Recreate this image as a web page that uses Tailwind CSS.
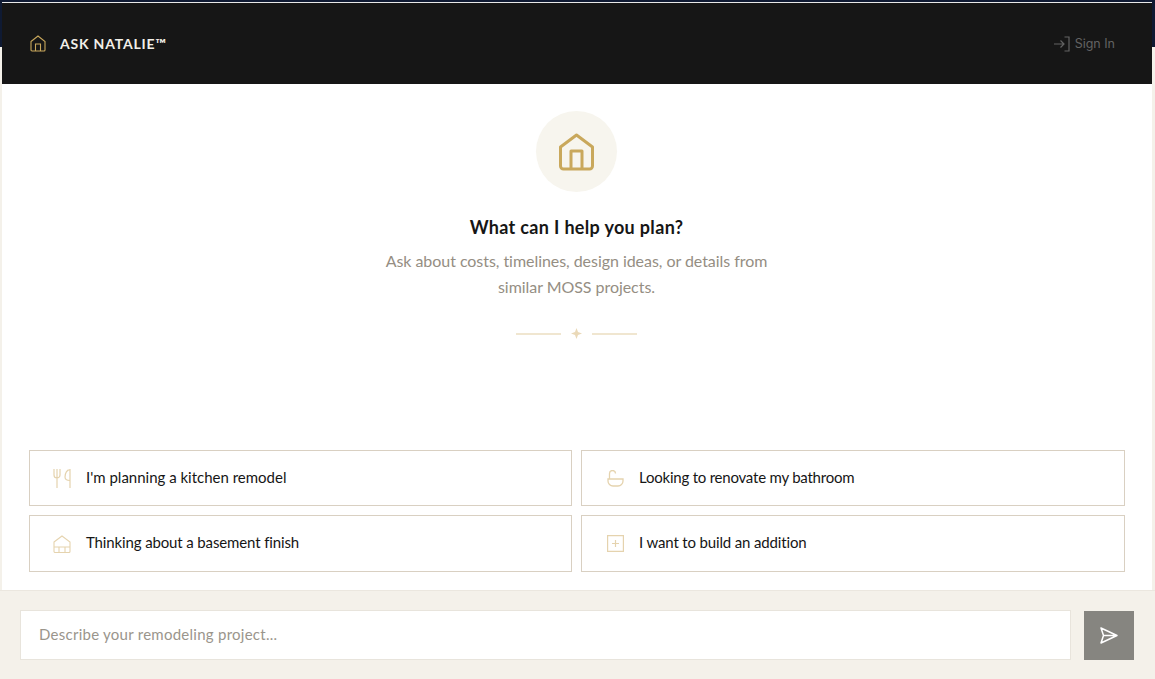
<!doctype html>
<html>
<head>
<meta charset="utf-8">
<script src="https://cdn.jsdelivr.net/npm/@tailwindcss/browser@4"></script>
</head>
<body class="m-0">
<div class="h-[679px] w-[1155px] overflow-hidden bg-[linear-gradient(#0f1a33_47px,#f4f1ea_47px)] pt-[2px] pl-[2px] pr-[3px] font-['Lato',sans-serif] flex flex-col">
  <header class="h-[82px] shrink-0 bg-[#161616] border-t border-[#e8e8e8] flex items-center justify-between pl-[28px] pr-[37px]">
    <div class="flex items-center gap-[14px]">
      <svg class="w-[16px] h-[17px]" viewBox="0 0 16 17" fill="none" stroke="#c9a85c" stroke-width="1.1"><path d="M1 6.500 8 1l7 5.500V15a1 1 0 0 1-1 1H2a1 1 0 0 1-1-1z"/><path d="M5.500 16V9h5v7"/></svg>
      <span class="text-[14px] font-bold tracking-[0.8px] text-[#f2efe8]">ASK NATALIE™</span>
    </div>
    <div class="flex items-center gap-[5px] text-[#636363]">
      <svg class="w-[16px] h-[16px]" viewBox="0 0 16 16" fill="none" stroke="currentColor" stroke-width="1.2"><path d="M0 8h10M6.500 4.500 10 8l-3.500 3.500M10.500 1H15v14h-4.500"/></svg>
      <span class="text-[12.5px] mt-[1px] font-['Inter',sans-serif]">Sign In</span>
    </div>
  </header>
  <main class="flex-1 bg-white flex flex-col items-center pt-[27px] px-[27px]">
    <div class="mr-[1px] w-[81px] h-[81px] rounded-full bg-[#f7f5ee] flex items-center justify-center">
      <svg class="w-[35px] h-[38px]" viewBox="0 0 35 38" fill="none" stroke="#c9a85c" stroke-width="3" stroke-linejoin="round"><path d="M1.500 14 17.500 2l16 12v19a3 3 0 0 1-3 3h-26a3 3 0 0 1-3-3z"/><path d="M12 36V18h11v18"/></svg>
    </div>
    <h1 class="mr-[1px] mt-[23px] text-[18px] leading-[24px] font-bold tracking-[0.33px] text-[#161616]">What can I help you plan?</h1>
    <p class="mr-[1px] mt-[9px] w-[420px] text-center text-[16px] leading-[26px] font-normal tracking-[-0.05px] text-[#958e83]">Ask about costs, timelines, design ideas, or details from<br>similar MOSS projects.</p>
    <div class="mr-[1px] mt-[28px] flex items-center gap-[10px]">
      <span class="w-[45px] h-[2px] bg-[#f0e6d0]"></span>
      <svg class="w-[11px] h-[11px]" viewBox="0 0 11 11" fill="#ead9b8"><path d="M5.500 0 7 4l4 1.500L7 7l-1.500 4L4 7 0 5.500 4 4z"/></svg>
      <span class="w-[45px] h-[2px] bg-[#f0e6d0]"></span>
    </div>
    <div class="mt-auto mb-[18px] w-full grid grid-cols-[543px_544px] gap-x-[9px] gap-y-[9px] text-[15px] text-[#161616]">
      <button class="h-[56px] border border-[#d9d0c2] bg-white flex items-center gap-[15px] pl-[23px]">
        <svg class="w-[18px] h-[19px]" viewBox="0 0 18 19" fill="none" stroke="#e5d3ae" stroke-width="1.200"><path d="M1 0v6a3 3 0 0 0 6 0V0M4 0v19M17 0v19M17 .6C14 .6 12 4 12 8c0 2.500 2 3.500 5 3.500"/></svg>
        <span class="pb-[2px]">I'm planning a kitchen remodel</span>
      </button>
      <button class="h-[56px] border border-[#d9d0c2] bg-white flex items-center gap-[15px] pl-[25px]">
        <svg class="w-[17px] h-[17px]" viewBox="0 0 17 17" fill="none" stroke="#e5d3ae" stroke-width="1.300"><path d="M2.500 9V3.500a3 3 0 0 1 6 0"/><path d="M1 9h15v2a5 5 0 0 1-5 5H6a5 5 0 0 1-5-5z"/></svg>
        <span class="pb-[2px] tracking-[-0.22px]">Looking to renovate my bathroom</span>
      </button>
      <button class="h-[57px] border border-[#d9d0c2] bg-white flex items-center gap-[15px] pl-[23px]">
        <svg class="w-[18px] h-[18px]" viewBox="0 0 18 18" fill="none" stroke="#e5d3ae" stroke-width="1.100"><path d="M1 7 9 1l8 6v9.500a1 1 0 0 1-1 1H2a1 1 0 0 1-1-1zM1 12h16M6 12v5.500M12 12v5.500"/></svg>
        <span class="pb-[2px] tracking-[-0.13px]">Thinking about a basement finish</span>
      </button>
      <button class="h-[57px] border border-[#d9d0c2] bg-white flex items-center gap-[15px] pl-[25px]">
        <svg class="w-[17px] h-[17px]" viewBox="0 0 17 17" fill="none" stroke="#e5d3ae" stroke-width="1.200"><path d="M.6.600h15.800v15.800H.6zM8.500 5v7M5 8.500h7"/></svg>
        <span class="pb-[2px] tracking-[-0.15px]">I want to build an addition</span>
      </button>
    </div>
  </main>
  <footer class="h-[89px] shrink-0 -ml-[2px] -mr-[3px] flex items-start gap-[13px] pt-[19px] pl-[20px] pr-[21px] bg-[#f4f1ea] border-t border-[#ebe7df]">
    <div class="flex-1 h-[50px] bg-white border border-[#e8e4dc] flex items-center pl-[18px] pb-[2px] text-[15px] tracking-[0.26px] text-[#9a958c]">Describe your remodeling project...</div>
    <button class="mt-[1px] w-[50px] h-[49px] bg-[#868580] flex items-center justify-center">
      <svg class="w-[18px] h-[17px]" viewBox="0 0 18 17" fill="none" stroke="#ffffff" stroke-width="1.500" stroke-linejoin="round"><path d="M1 1 17 8.500 1 16l2.500-7.500zM3.500 8.500H17"/></svg>
    </button>
  </footer>
</div>
</body>
</html>
